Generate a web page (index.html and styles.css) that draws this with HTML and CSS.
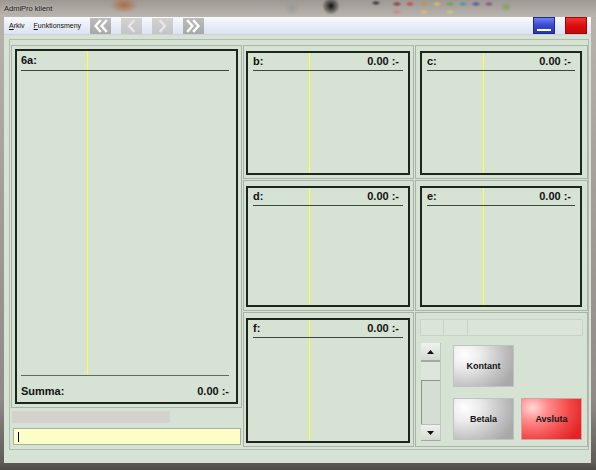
FILE: index.html
```html
<!DOCTYPE html>
<html>
<head>
<meta charset="utf-8">
<title>AdmiPro klient</title>
<link rel="stylesheet" href="styles.css">
</head>
<body>
<div class="window">
  <div class="titlebar"><span class="title">AdmiPro klient</span></div>
  <div class="client">
    <div class="menubar">
      <span class="menu first"><u>A</u>rkiv</span>
      <span class="menu"><u>F</u>unktionsmeny</span>
      <div class="nav">
        <div class="navbtn"><svg width="21" height="16" viewBox="0 0 21 16"><polyline points="10,3 5.5,8 10,13" /><polyline points="16,3 11.5,8 16,13" /></svg></div>
        <div class="navbtn off"><svg width="21" height="16" viewBox="0 0 21 16"><polyline points="12.5,3 8,8 12.5,13" /></svg></div>
        <div class="navbtn off"><svg width="21" height="16" viewBox="0 0 21 16"><polyline points="8.5,3 13,8 8.5,13" /></svg></div>
        <div class="navbtn"><svg width="21" height="16" viewBox="0 0 21 16"><polyline points="5,3 9.5,8 5,13" /><polyline points="11,3 15.5,8 11,13" /></svg></div>
      </div>
      <div class="spacer"></div>
      <div class="winbtn min"><span class="bar"></span></div>
      <div class="winbtn close"></div>
    </div>
    <div class="main">
      <div class="frame">
        <div class="leftcol">
          <div class="group big">
            <div class="box">
              <div class="list wide">
                <div class="hdr big-hdr"><span>6a:</span></div>
              </div>
              <div class="sum"><span>Summa:</span><span>0.00 :-</span></div>
            </div>
          </div>
          <div class="graybar"></div>
          <div class="input"><span class="caret"></span></div>
        </div>
        <div class="grid">
          <div class="group mid">
            <div class="box"><div class="list"><div class="hdr"><span>b:</span><span>0.00 :-</span></div></div></div>
          </div>
          <div class="group right">
            <div class="box"><div class="list"><div class="hdr"><span>c:</span><span>0.00 :-</span></div></div></div>
          </div>
          <div class="group mid">
            <div class="box"><div class="list"><div class="hdr"><span>d:</span><span>0.00 :-</span></div></div></div>
          </div>
          <div class="group right">
            <div class="box"><div class="list"><div class="hdr"><span>e:</span><span>0.00 :-</span></div></div></div>
          </div>
          <div class="group mid">
            <div class="box"><div class="list"><div class="hdr"><span>f:</span><span>0.00 :-</span></div></div></div>
          </div>
          <div class="group ctrl">
            <div class="cells"><span class="cell c1"></span><span class="cell c2"></span><span class="cell c3"></span></div>
            <div class="ctrl-body">
              <div class="scroll">
                <div class="sbtn up"><svg width="7" height="4" viewBox="0 0 7 4"><polygon points="3.5,0 7,4 0,4" /></svg></div>
                <div class="track"></div>
                <div class="thumb"></div>
                <div class="sbtn down"><svg width="7" height="4" viewBox="0 0 7 4"><polygon points="0,0 7,0 3.5,4" /></svg></div>
              </div>
              <div class="btns">
                <div class="pbtn gray kontant">Kontant</div>
                <div class="pbtn gray betala">Betala</div>
                <div class="pbtn red avsluta">Avsluta</div>
              </div>
            </div>
          </div>
        </div>
      </div>
    </div>
  </div>
</div>
</body>
</html>
```

FILE: styles.css
```css
* { box-sizing: border-box; }
html, body { margin: 0; padding: 0; }
body {
  width: 596px;
  height: 470px;
  overflow: hidden;
  font-family: "Liberation Sans", Arial, sans-serif;
}
.window {
  width: 596px;
  height: 470px;
  display: flex;
  flex-direction: column;
  background:
    linear-gradient(to bottom, #a9a49e 0px, #b7b2ac 20px, #a29d97 200px, #8f8a85 400px, #5f5b57 462px, #4e4a46 470px);
}
.titlebar {
  height: 17px;
  flex: none;
  display: flex;
  align-items: center;
  padding-left: 4px;
  background:
    radial-gradient(ellipse 14px 8px at 124px 5px, rgba(176,92,40,0.75), rgba(176,92,40,0) 100%),
    radial-gradient(ellipse 9px 9px at 331px 6px, rgba(10,10,10,0.95), rgba(10,10,10,0) 100%),
    radial-gradient(ellipse 8px 8px at 292px 8px, rgba(150,150,150,0.7), rgba(150,150,150,0) 100%),
    radial-gradient(ellipse 5px 3px at 376px 3px, rgba(30,30,30,0.8), rgba(30,30,30,0) 100%),
    radial-gradient(ellipse 5px 3px at 397px 4px, rgba(150,30,40,0.8), rgba(150,30,40,0) 100%),
    radial-gradient(ellipse 5px 3px at 410px 4px, rgba(210,40,40,0.7), rgba(210,40,40,0) 100%),
    radial-gradient(ellipse 5px 3px at 424px 4px, rgba(220,130,40,0.7), rgba(220,130,40,0) 100%),
    radial-gradient(ellipse 5px 3px at 437px 4px, rgba(230,210,60,0.7), rgba(230,210,60,0) 100%),
    radial-gradient(ellipse 5px 3px at 450px 4px, rgba(80,170,60,0.7), rgba(80,170,60,0) 100%),
    radial-gradient(ellipse 5px 3px at 463px 4px, rgba(40,150,160,0.7), rgba(40,150,160,0) 100%),
    radial-gradient(ellipse 5px 3px at 476px 4px, rgba(50,60,170,0.7), rgba(50,60,170,0) 100%),
    radial-gradient(ellipse 5px 3px at 489px 4px, rgba(130,50,140,0.7), rgba(130,50,140,0) 100%),
    radial-gradient(ellipse 6px 5px at 506px 7px, rgba(120,160,60,0.7), rgba(120,160,60,0) 100%),
    radial-gradient(ellipse 5px 3px at 397px 12px, rgba(220,120,90,0.6), rgba(220,120,90,0) 100%),
    radial-gradient(ellipse 5px 3px at 424px 12px, rgba(240,200,70,0.6), rgba(240,200,70,0) 100%),
    radial-gradient(ellipse 5px 3px at 450px 12px, rgba(210,220,90,0.6), rgba(210,220,90,0) 100%),
    linear-gradient(to bottom, #9d9893, #bab5af);
}
.title {
  font-size: 7.5px;
  color: #151515;
  text-shadow: 0 0 3px rgba(255,255,255,0.6);
}
.client {
  flex: 1;
  display: flex;
  flex-direction: column;
  margin: 0 5px 7px 4px;
}
.menubar {
  height: 18px;
  flex: none;
  display: flex;
  align-items: center;
  background: linear-gradient(to bottom, #f8fafd, #e6ebf5 60%, #dde4f0);
  border-bottom: 1px solid #c9d0db;
  font-size: 7px;
  color: #111;
}
.menu { margin-left: 9px; }
.menu.first { margin-left: 5px; }
.menu u { text-decoration: underline; }
.nav {
  display: flex;
  gap: 10px;
  margin-left: 9px;
}
.navbtn {
  width: 21px;
  height: 16px;
  background: linear-gradient(to bottom, #bcbcbc, #a8a8a8);
}
.navbtn svg { display: block; }
.navbtn polyline {
  fill: none;
  stroke: #ffffff;
  stroke-width: 2.4;
  stroke-linecap: square;
}
.navbtn.off { background: linear-gradient(to bottom, #d2d2d2, #c4c4c4); }
.navbtn.off polyline { stroke: #e6e6e6; }
.spacer { flex: 1; }
.winbtn {
  width: 22px;
  height: 17px;
  margin-right: 10px;
}
.winbtn.min {
  display: flex;
  justify-content: center;
  align-items: flex-end;
  background: linear-gradient(to bottom, #7480ec, #3c4bd2 45%, #2636b4 100%);
  border: 1px solid #1e2a86;
}
.winbtn.min .bar {
  width: 14px;
  height: 2px;
  background: #ffffff;
  margin-bottom: 2px;
}
.winbtn.close {
  margin-right: 4px;
  background: linear-gradient(to bottom, #f23434, #da1010 50%, #c40808);
  border: 1px solid #9c0606;
}
.main {
  flex: 1;
  background: #d6e2d3;
  padding: 4px 2px 13px 5px;
  display: flex;
}
.frame {
  flex: 1;
  border: 1px solid #b1bbaf;
  display: flex;
  padding: 5px 0 0 1px;
}
.leftcol {
  width: 231px;
  display: flex;
  flex-direction: column;
}
.group {
  border: 1px solid #a9b4a7;
  background: #d6e2d3;
}
.group.big {
  height: 363px;
  padding: 3px;
}
.box {
  height: 100%;
  border: 2px solid #1c271c;
  display: flex;
  flex-direction: column;
}
.list {
  flex: 1;
  background-image: linear-gradient(#ffff3c, #ffff3c);
  background-repeat: no-repeat;
  background-size: 1px 100%;
  background-position: 61px 0;
}
.list.wide {
  background-position: 70px 0;
}
.hdr {
  display: flex;
  justify-content: space-between;
  margin: 0 5px;
  padding-right: 4px;
  height: 18px;
  line-height: 17px;
  border-bottom: 1px solid #3a473a;
  font-size: 11px;
  font-weight: bold;
  color: #111;
}
.hdr.big-hdr {
  margin: 0 7px 0 4px;
  height: 20px;
  line-height: 19px;
}
.sum {
  display: flex;
  justify-content: space-between;
  margin: 0 7px 0 4px;
  height: 27px;
  padding-top: 4px;
  line-height: 22px;
  border-top: 1px solid #5d6a5d;
  font-size: 11px;
  font-weight: bold;
  color: #111;
}
.graybar {
  width: 158px;
  height: 12px;
  margin: 3px 0 0 1px;
  background: #d5d1cc;
}
.input {
  width: 228px;
  height: 17px;
  margin: 5px 0 0 2px;
  background: #fdfdc8;
  border: 1px solid #a8b0a5;
  display: flex;
  align-items: center;
}
.caret {
  width: 1px;
  height: 10px;
  background: #000;
  margin-left: 4px;
}
.grid {
  margin-left: 1px;
  display: grid;
  grid-template-columns: 171px 173px;
  grid-template-rows: 134px 131px 135px;
  gap: 1px;
}
.group.mid { padding: 5px 3px 3px 2px; }
.group.right { padding: 5px 5px 3px 4px; }
.group.ctrl {
  padding: 6px 4px 3px 4px;
  display: flex;
  flex-direction: column;
}
.cells {
  display: flex;
  height: 17px;
  width: 163px;
}
.cell {
  height: 17px;
  background: #dae5d8;
  border: 1px solid #c8d2c6;
}
.cell.c1 { width: 24px; }
.cell.c2 { width: 24px; border-left: none; }
.cell.c3 { flex: 1; border-left: none; }
.ctrl-body {
  display: flex;
  margin-top: 7px;
}
.scroll {
  width: 20px;
  height: 98px;
  margin-left: 1px;
  display: flex;
  flex-direction: column;
  background: #dde6db;
  border-right: 1px solid #c0c9be;
}
.sbtn {
  display: flex;
  align-items: center;
  justify-content: center;
  background: linear-gradient(to bottom, #eef2ed, #d3dbd1);
}
.sbtn polygon { fill: #111; }
.sbtn svg { display: block; }
.sbtn.up {
  height: 19px;
  border-bottom: 2px solid #a2aaa0;
}
.track { height: 18px; }
.thumb {
  flex: 1;
  border-top: 1px solid #8c948a;
  border-left: 1px solid #8c948a;
  background: #d4ded2;
}
.sbtn.down {
  height: 17px;
  border-top: 1px solid #b9c1b7;
  border-bottom: 1px solid #a2aaa0;
}
.btns {
  margin: 2px 0 0 12px;
  display: grid;
  grid-template-columns: 61px 61px;
  grid-template-rows: 42px 42px;
  column-gap: 7px;
  row-gap: 11px;
}
.pbtn {
  display: flex;
  align-items: center;
  justify-content: center;
  font-size: 9px;
  font-weight: bold;
  color: #151515;
}
.pbtn.gray {
  border: 1px solid #bfc3bf;
  background: radial-gradient(ellipse 90% 110% at 18% 22%, #ffffff 0%, #ebebeb 30%, #c4c4c4 70%, #a9a9a9 100%);
}
.pbtn.red {
  border: 1px solid #d8a0a0;
  background: radial-gradient(ellipse 90% 110% at 18% 22%, #ffd8d8 0%, #ff8a8a 30%, #f24848 70%, #e42424 100%);
}
.kontant { grid-column: 1; grid-row: 1; }
.betala { grid-column: 1; grid-row: 2; }
.avsluta { grid-column: 2; grid-row: 2; }
```
